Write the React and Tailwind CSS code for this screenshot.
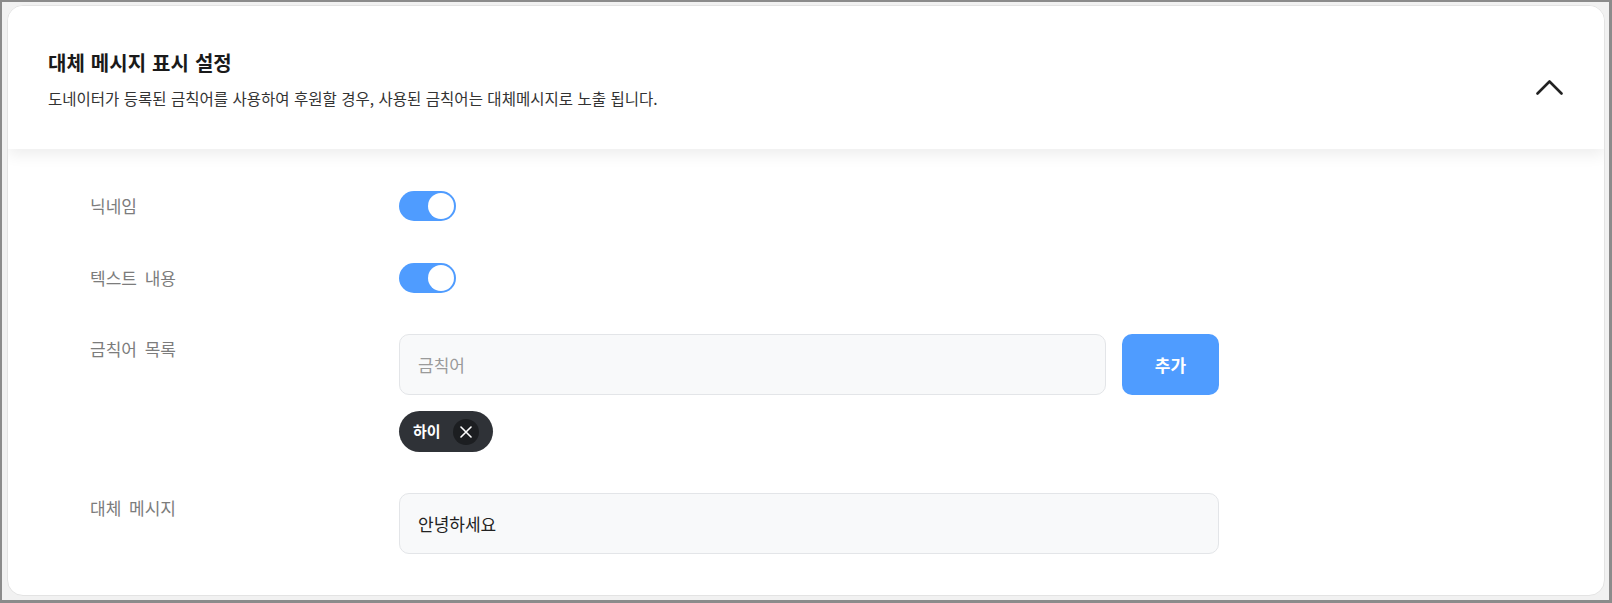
import React, { useState } from 'react';

const font = { fontFamily: '"Noto Sans CJK KR", "Noto Sans", sans-serif' };

const Toggle = ({ checked, onChange }) => (
  <button
    type="button"
    onClick={onChange}
    className={`flex h-[30px] w-[57px] items-center rounded-full p-[2px] transition-colors ${checked ? 'bg-[#4f9cff] justify-end' : 'bg-[#d1d5db] justify-start'}`}
  >
    <span className="block h-[26px] w-[26px] rounded-full bg-white" />
  </button>
);

const Row = ({ label, children, top = false, className = '' }) => (
  <div className={`flex ${top ? 'items-start' : 'items-center'} ${className}`}>
    <div className={`w-[309px] shrink-0 text-[17px] leading-6 text-[#7c7c7c] [word-spacing:4px] ${top ? 'pt-[3px]' : ''}`}>{label}</div>
    <div className="flex-1">{children}</div>
  </div>
);

export default function App() {
  const [nick, setNick] = useState(true);
  const [text, setText] = useState(true);
  const [word, setWord] = useState('');
  const [words, setWords] = useState(['하이']);
  const [replace, setReplace] = useState('안녕하세요');

  return (
    <div style={font} className="h-[603px] w-full border-t-2 border-l-2 border-r-[3px] border-b-[3px] border-[#8b8b8b] bg-[#f1f1f1] pt-[3px] pl-[5px] pr-[4px] pb-[4px]">
      <div className="flex h-full flex-col overflow-hidden rounded-[16px] border border-[#e3e3e3] bg-white">
        <div className="relative z-10 flex h-[143px] shrink-0 items-start justify-between bg-white pl-[40px] pr-[41px] pt-[43px] shadow-[0_6px_14px_rgba(0,0,0,0.07)]">
          <div>
            <h2 className="text-[20px] font-bold leading-7 text-[#1a1a1a] [word-spacing:1.5px]">대체 메시지 표시 설정</h2>
            <p className="mt-[11px] text-[15.5px] leading-5 text-[#333] [word-spacing:1px]">
              도네이터가 등록된 금칙어를 사용하여 후원할 경우, 사용된 금칙어는 대체메시지로 노출 됩니다.
            </p>
          </div>
          <button type="button" className="mt-[30px]">
            <svg width="27" height="16" viewBox="0 0 27 16" fill="none">
              <polyline points="1.5,14.5 13.5,2.5 25.5,14.5" stroke="#222" strokeWidth="2.6" strokeLinecap="round" strokeLinejoin="round" />
            </svg>
          </button>
        </div>

        <div className="flex flex-col pl-[82px] pt-[42px]">
          <Row label="닉네임">
            <Toggle checked={nick} onChange={() => setNick(!nick)} />
          </Row>
          <Row label="텍스트 내용" className="mt-[42px]">
            <Toggle checked={text} onChange={() => setText(!text)} />
          </Row>
          <Row label="금칙어 목록" top className="mt-[41px]">
            <div className="flex gap-[16px]">
              <input
                value={word}
                onChange={(e) => setWord(e.target.value)}
                placeholder="금칙어"
                className="h-[61px] w-[707px] rounded-[10px] border border-[#e3e5e8] bg-[#f8f9fa] px-[18px] text-[17px] text-[#222] placeholder:text-[#9a9a9a] focus:outline-none"
              />
              <button
                type="button"
                onClick={() => { if (word) { setWords([...words, word]); setWord(''); } }}
                className="h-[61px] w-[97px] rounded-[10px] bg-[#4f9cff] text-[17px] font-bold text-white"
              >
                추가
              </button>
            </div>
            <div className="mt-[16px] flex gap-2">
              {words.map((w) => (
                <span key={w} className="flex h-[41px] items-center gap-[12px] rounded-full bg-[#2f3237] pl-[14px] pr-[14px] text-[15px] font-bold text-white">
                  {w}
                  <button
                    type="button"
                    onClick={() => setWords(words.filter((x) => x !== w))}
                    className="flex h-[26px] w-[26px] items-center justify-center rounded-full bg-[#1c1e21]"
                  >
                    <svg width="12" height="12" viewBox="0 0 12 12">
                      <path d="M1 1L11 11M11 1L1 11" stroke="#fff" strokeWidth="1.6" strokeLinecap="round" />
                    </svg>
                  </button>
                </span>
              ))}
            </div>
          </Row>
          <Row label="대체 메시지" top className="mt-[41px]">
            <input
              value={replace}
              onChange={(e) => setReplace(e.target.value)}
              className="h-[61px] w-[820px] rounded-[10px] border border-[#e3e5e8] bg-[#f8f9fa] px-[18px] text-[17px] text-[#222] focus:outline-none"
            />
          </Row>
        </div>
      </div>
    </div>
  );
}
